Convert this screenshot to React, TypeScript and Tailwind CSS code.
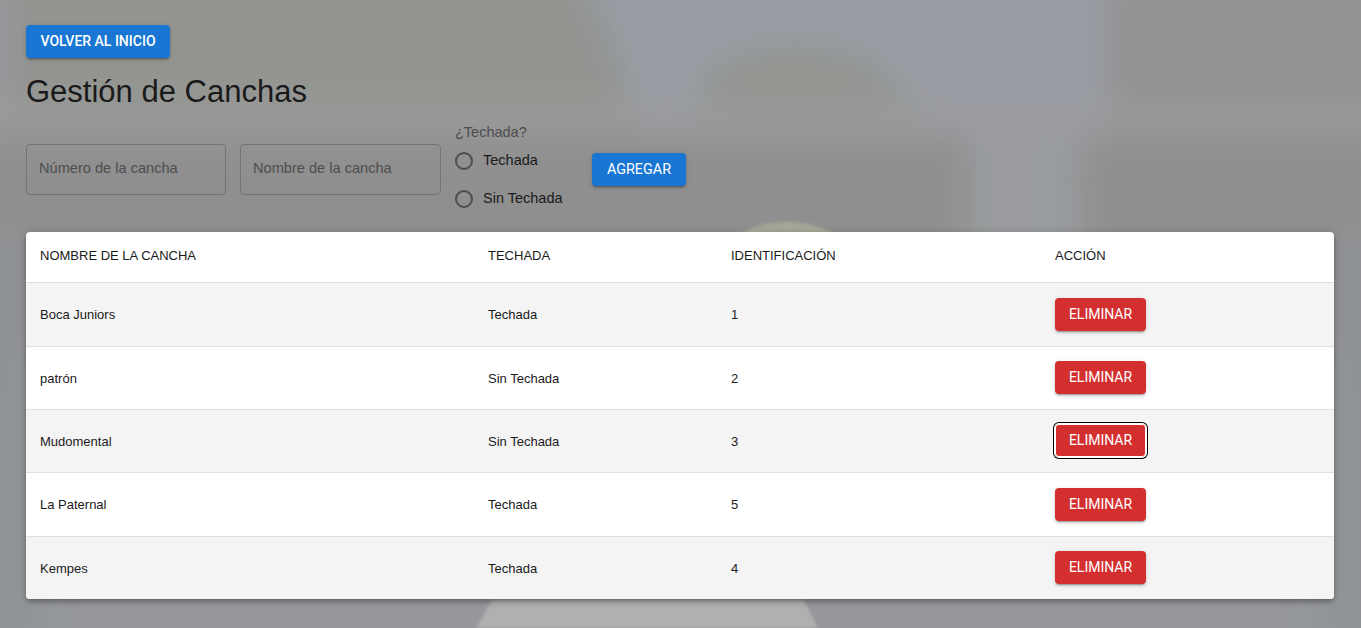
import React from 'react';

const canchas = [
  { nombre: 'Boca Juniors', techada: 'Techada', id: 1, alto: 'h-[64px]' },
  { nombre: 'patrón', techada: 'Sin Techada', id: 2, alto: 'h-[63px]' },
  { nombre: 'Mudomental', techada: 'Sin Techada', id: 3, alto: 'h-[63px]' },
  { nombre: 'La Paternal', techada: 'Techada', id: 5, alto: 'h-[64px]' },
  { nombre: 'Kempes', techada: 'Techada', id: 4, alto: 'h-[63px]' },
];

const shadow = 'shadow-[0_3px_1px_-2px_rgba(0,0,0,0.2),0_2px_2px_0_rgba(0,0,0,0.14),0_1px_5px_0_rgba(0,0,0,0.12)]';

// foto de fondo borrosa
const Background = () => (
  <svg className="absolute inset-0 h-full w-full" viewBox="0 0 1361 628" preserveAspectRatio="none">
    <defs>
      <filter id="soft" x="-10%" y="-10%" width="120%" height="120%">
        <feGaussianBlur stdDeviation="18" />
      </filter>
      <filter id="edge" x="-10%" y="-10%" width="120%" height="120%">
        <feGaussianBlur stdDeviation="1.5" />
      </filter>
    </defs>
    <rect width="1361" height="628" fill="#95979b" />
    <g filter="url(#soft)">
      <rect x="-40" y="-40" width="1440" height="160" fill="#939490" />
      <rect x="-40" y="-40" width="45" height="150" fill="#989aa0" />
      <path d="M575 -40 L950 -40 L950 135 L640 135 Q625 60 575 -40 Z" fill="#999ca4" />
      <path d="M700 125 L700 75 Q770 25 870 60 L945 125 Z" fill="#939590" />
      <rect x="945" y="-40" width="160" height="190" fill="#999ca5" />
      <rect x="1105" y="-40" width="300" height="170" fill="#939392" />
      <rect x="-40" y="108" width="1440" height="20" fill="#9d9d9d" />
      <rect x="-40" y="136" width="1010" height="220" fill="#8f8f8f" />
      <rect x="1080" y="136" width="320" height="220" fill="#8f8f8f" />
      <rect x="970" y="136" width="105" height="220" fill="#9a9c9f" />
      <rect x="-40" y="235" width="70" height="430" fill="#8f9296" />
      <rect x="1330" y="235" width="70" height="430" fill="#8f9296" />
    </g>
    <ellipse cx="787" cy="252" rx="58" ry="30" fill="#a4a898" filter="url(#edge)" />
    <path d="M492 600 L804 600 L818 628 L476 628 Z" fill="#b0b0b0" filter="url(#edge)" />
  </svg>
);

const Radio = ({ label }: { label: string }) => (
  <label className="flex h-[38px] items-center">
    <span className="mr-[10px] block h-[18px] w-[18px] rounded-full border-2 border-[#4d4d4d]" />
    <span className="font-['Liberation_Sans',sans-serif] text-[14.5px] text-[#1a1a1a]">{label}</span>
  </label>
);

const Campo = ({ placeholder, width }: { placeholder: string; width: string }) => (
  <input
    placeholder={placeholder}
    className={`${width} h-[51px] rounded border border-[#747474] bg-transparent px-3 pb-1 font-['Liberation_Sans',sans-serif] text-[14.6px] text-[#1a1a1a] outline-none placeholder:text-[#4d4d4d]`}
  />
);

export default function App() {
  return (
    <div className="relative min-h-[628px] overflow-hidden font-['Roboto',sans-serif]">
      <Background />
      <div className="relative pt-[25px] pr-[27px] pl-[26px]">
        <button className={`h-[33px] w-[144px] rounded bg-[#1976d2] text-[14px] font-medium text-white ${shadow}`}>
          VOLVER AL INICIO
        </button>
        <h1 className="mt-[15px] font-['Liberation_Sans',sans-serif] text-[31px] leading-[38px] font-normal text-[#1a1a1a]">Gestión de Canchas</h1>

        <div className="mt-[12px] flex items-start gap-[14px]">
          <div className="mt-[21px] flex gap-[14px]">
            <Campo placeholder="Número de la cancha" width="w-[200px]" />
            <Campo placeholder="Nombre de la cancha" width="w-[201px]" />
          </div>
          <div className="w-[123px]">
            <div className="font-['Liberation_Sans',sans-serif] text-[14.5px] leading-[19px] text-[#4d4d4d]">¿Techada?</div>
            <Radio label="Techada" />
            <Radio label="Sin Techada" />
          </div>
          <button className={`mt-[30px] h-[33px] w-[94px] rounded bg-[#1976d2] text-[14.4px] text-white ${shadow}`}>
            AGREGAR
          </button>
        </div>

        <div className="mt-[14px] overflow-hidden rounded bg-white shadow-[0_2px_4px_-1px_rgba(0,0,0,0.2),0_4px_5px_0_rgba(0,0,0,0.14),0_1px_10px_0_rgba(0,0,0,0.12)]">
          <table className="w-full table-fixed border-collapse text-left font-['Liberation_Sans',sans-serif] text-[13px] text-[#1a1a1a]">
            <colgroup>
              <col className="w-[448px]" />
              <col className="w-[243px]" />
              <col className="w-[324px]" />
              <col />
            </colgroup>
            <thead>
              <tr className="h-[50px] border-b border-[#e0e0e0]">
                <th className="px-[14px] pb-[3px] font-normal">NOMBRE DE LA CANCHA</th>
                <th className="px-[14px] pb-[3px] font-normal">TECHADA</th>
                <th className="px-[14px] pb-[3px] font-normal">IDENTIFICACIÓN</th>
                <th className="px-[14px] pb-[3px] font-normal">ACCIÓN</th>
              </tr>
            </thead>
            <tbody>
              {canchas.map((c, i) => (
                <tr key={c.id} className={`${c.alto} border-b border-[#e0e0e0] last:border-b-0 ${i % 2 === 0 ? 'bg-[#f4f4f4]' : 'bg-white'}`}>
                  <td className="px-[14px] pt-[2px]">{c.nombre}</td>
                  <td className="px-[14px] pt-[2px]">{c.techada}</td>
                  <td className="px-[14px] pt-[2px]">{c.id}</td>
                  <td className="px-[14px]">
                    <button
                      className={`block h-[33px] w-[91px] rounded bg-[#d32f2f] font-['Roboto',sans-serif] text-[14px] text-white ${c.id === 3 ? 'shadow-[inset_0_0_0_1px_#fff,0_0_0_1px_#fff,0_0_0_2px_#000]' : shadow}`}
                    >
                      ELIMINAR
                    </button>
                  </td>
                </tr>
              ))}
            </tbody>
          </table>
        </div>
      </div>
    </div>
  );
}
